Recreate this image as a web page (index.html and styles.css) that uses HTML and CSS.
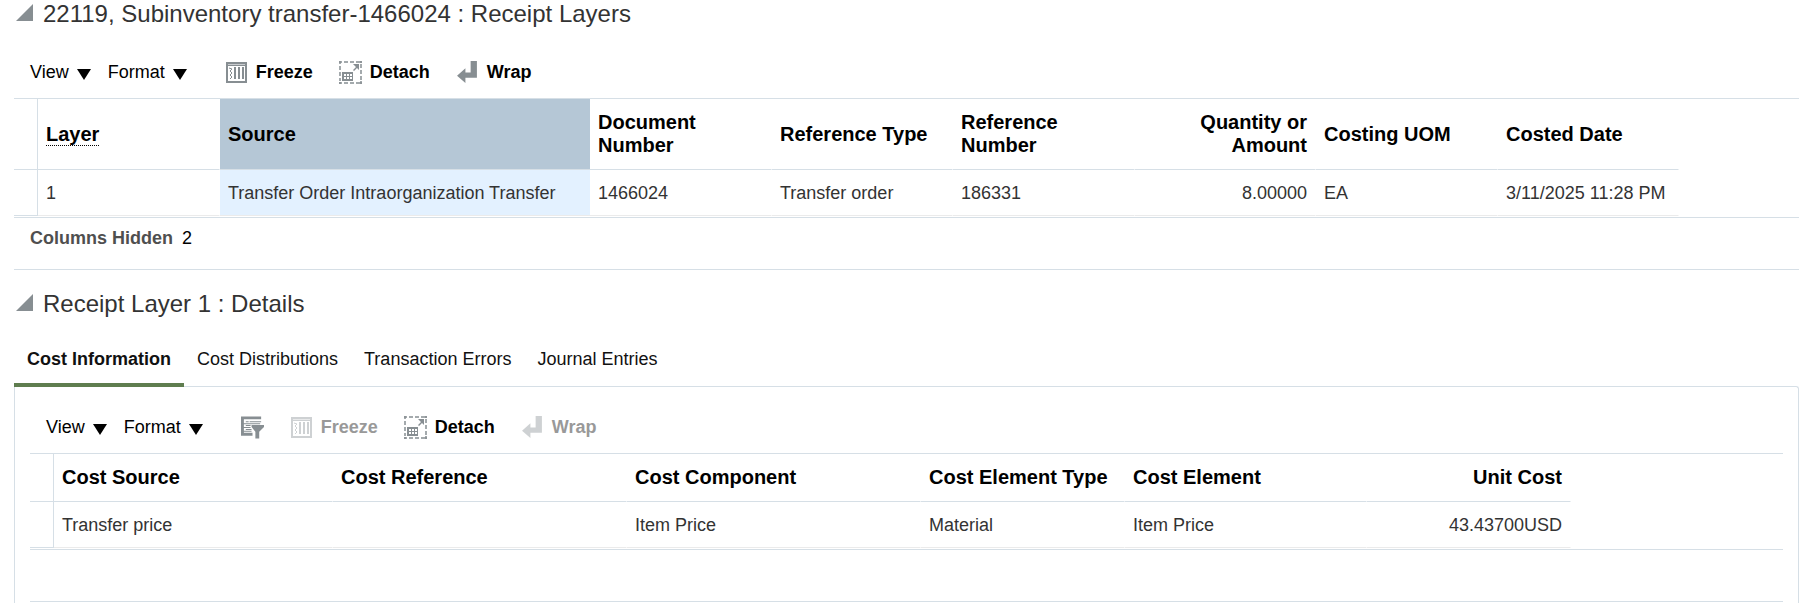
FILE: index.html
```html
<!DOCTYPE html>
<html lang="en">
<head>
    <meta charset="UTF-8">
    <meta name="viewport" content="width=device-width, initial-scale=1.0">
    <title>Receipt Layers</title>
    <link rel="stylesheet" href="styles.css">
</head>
<body>
    <!-- shared icons -->
    <svg class="icon-defs" width="0" height="0" aria-hidden="true">
        <symbol id="icon-disclosure" viewBox="0 0 17 17">
            <path d="M17 0v17H0z" fill="#878e92"/>
        </symbol>
        <symbol id="icon-arrow" viewBox="0 0 14 11">
            <path d="M0 0h14L7 11z" fill="#000"/>
        </symbol>
        <symbol id="icon-freeze" viewBox="0 0 23 23">
            <path d="M1 1h21v21H1zM3 5v15h17V5z" fill="#878e92" fill-rule="evenodd"/>
            <path d="M3 3h17v1H3z" fill="#c9cccf"/>
            <path d="M9 6h2v12H9zM13 6h2v12h-2zM17 6h2v12h-2z" fill="#878e92"/>
            <path d="M4 7l3 1-2 2 2 2-2 2 2 2-2 2" fill="none" stroke="#878e92"/>
        </symbol>
        <symbol id="icon-detach" viewBox="0 0 23 23">
            <path d="M0 1h3M5 1h4M11 1h4M17 1h3M0 22h3M5 22h4M11 22h4M17 22h3M1 0v3M1 5v4M1 11v4M1 17v3M22 3v4M22 9v4M22 15v4M20 1h3M20 22h3M22 0v2M1 21v2M22 20v3" fill="none" stroke="#878e92" stroke-width="1.5"/>
            <path d="M3 11h11v9H3z" fill="#878e92"/>
            <path d="M5 13h2v2H5zM8 13h2v2H8zM11 13h2v2h-2zM5 16h2v2H5zM8 16h2v2H8zM11 16h2v2h-2z" fill="#fff"/>
            <path d="M14 3h6v6l-2-2-3 3-1-1 3-3z" fill="#878e92"/>
        </symbol>
        <symbol id="icon-wrap" viewBox="0 0 20 22">
            <path d="M13 0h6v16H8v5L0 14l8-7v4h5z" fill="#878e92"/>
        </symbol>
        <symbol id="icon-filter" viewBox="0 0 24 23">
            <path d="M0 0h21v3H0zM0 3h3v17H0zM5 5h3v1H5zM9 5h12v1H9zM3 7h17v1H3zM5 9h5v1H5zM3 11h7v1H3zM5 13h6v1H5zM3 15h8v1H3zM0 17h12v3H0z" fill="#878e92"/>
            <path d="M11 9h13v2l-5 5v7h-4v-7l-4-5z" fill="#878e92"/>
        </symbol>
    </svg>

    <section class="section">
        <header class="section-header">
            <button type="button" class="disclosure" aria-label="Collapse Receipt Layers"><svg><use href="#icon-disclosure"/></svg></button>
            <h2>22119, Subinventory transfer-1466024 : Receipt Layers</h2>
        </header>

        <div class="toolbar">
            <button type="button" class="menu-btn">View <svg><use href="#icon-arrow"/></svg></button>
            <button type="button" class="menu-btn">Format <svg><use href="#icon-arrow"/></svg></button>
            <div class="tools">
                <button type="button" class="tool-btn"><svg><use href="#icon-freeze"/></svg>Freeze</button>
                <button type="button" class="tool-btn"><svg><use href="#icon-detach"/></svg>Detach</button>
                <button type="button" class="tool-btn"><svg><use href="#icon-wrap"/></svg>Wrap</button>
            </div>
        </div>

        <div class="table-wrap">
            <table class="layers-table">
                <colgroup>
                    <col class="col-handle">
                    <col class="col-id">
                    <col class="col-source">
                    <col class="col-id">
                    <col class="col-text">
                    <col class="col-id">
                    <col class="col-text">
                    <col class="col-id">
                    <col class="col-text">
                </colgroup>
                <thead>
                    <tr>
                        <td class="handle"></td>
                        <th scope="col"><span class="hint">Layer</span></th>
                        <th scope="col" class="selected">Source</th>
                        <th scope="col">Document<br>Number</th>
                        <th scope="col">Reference Type</th>
                        <th scope="col">Reference<br>Number</th>
                        <th scope="col" class="num">Quantity or<br>Amount</th>
                        <th scope="col">Costing UOM</th>
                        <th scope="col">Costed Date</th>
                    </tr>
                </thead>
                <tbody>
                    <tr>
                        <td class="handle"></td>
                        <td>1</td>
                        <td class="selected">Transfer Order Intraorganization Transfer</td>
                        <td>1466024</td>
                        <td>Transfer order</td>
                        <td>186331</td>
                        <td class="num">8.00000</td>
                        <td>EA</td>
                        <td>3/11/2025 11:28 PM</td>
                    </tr>
                </tbody>
            </table>
        </div>
        <p class="status"><strong>Columns Hidden</strong> 2</p>
    </section>

    <section class="section details">
        <header class="section-header">
            <button type="button" class="disclosure" aria-label="Collapse Details"><svg><use href="#icon-disclosure"/></svg></button>
            <h2>Receipt Layer 1 : Details</h2>
        </header>

        <nav class="tabs">
            <a href="#cost-information" class="tab active">Cost Information</a>
            <a href="#cost-distributions" class="tab">Cost Distributions</a>
            <a href="#transaction-errors" class="tab">Transaction Errors</a>
            <a href="#journal-entries" class="tab">Journal Entries</a>
        </nav>

        <div class="panel" id="cost-information">
            <div class="toolbar">
                <button type="button" class="menu-btn">View <svg><use href="#icon-arrow"/></svg></button>
                <button type="button" class="menu-btn">Format <svg><use href="#icon-arrow"/></svg></button>
                <div class="tools">
                    <button type="button" class="tool-btn" aria-label="Query by Example"><svg><use href="#icon-filter"/></svg></button>
                    <button type="button" class="tool-btn" disabled><svg><use href="#icon-freeze"/></svg>Freeze</button>
                    <button type="button" class="tool-btn"><svg><use href="#icon-detach"/></svg>Detach</button>
                    <button type="button" class="tool-btn" disabled><svg><use href="#icon-wrap"/></svg>Wrap</button>
                </div>
            </div>

            <div class="table-wrap">
                <table class="cost-table">
                    <colgroup>
                        <col class="col-handle">
                        <col class="col-cost-source">
                        <col class="col-wide">
                        <col class="col-wide">
                        <col class="col-narrow">
                        <col class="col-element">
                        <col class="col-narrow">
                    </colgroup>
                    <thead>
                        <tr>
                            <td class="handle"></td>
                            <th scope="col">Cost Source</th>
                            <th scope="col">Cost Reference</th>
                            <th scope="col">Cost Component</th>
                            <th scope="col">Cost Element Type</th>
                            <th scope="col">Cost Element</th>
                            <th scope="col" class="num">Unit Cost</th>
                        </tr>
                    </thead>
                    <tbody>
                        <tr>
                            <td class="handle"></td>
                            <td>Transfer price</td>
                            <td></td>
                            <td>Item Price</td>
                            <td>Material</td>
                            <td>Item Price</td>
                            <td class="num">43.43700USD</td>
                        </tr>
                    </tbody>
                </table>
            </div>
            <div class="panel-footer"></div>
        </div>
    </section>
</body>
</html>
```
FILE: styles.css
```css
* {
    box-sizing: border-box;
}
body {
    margin: 0;
    padding: 0 14px;
    font-family: "Liberation Sans", Arial, sans-serif;
    font-size: 18px;
    line-height: 22px;
    color: #000;
    background-color: #fff;
}
.icon-defs {
    display: none;
}
button {
    padding: 0;
    border: none;
    background: none;
    font: inherit;
    color: inherit;
    cursor: pointer;
}
.section-header {
    display: flex;
    align-items: center;
    gap: 10px;
    height: 28px;
    padding-left: 2px;
}
.disclosure svg {
    display: block;
    width: 17px;
    height: 17px;
    margin-bottom: 3px;
}
h2 {
    margin: 0;
    font-size: 24px;
    line-height: 28px;
    font-weight: normal;
    color: #333;
}

/* toolbar */
.toolbar {
    display: flex;
    align-items: center;
    gap: 17px;
    height: 52px;
    margin-top: 18px;
    padding-left: 16px;
}
.menu-btn,
.tool-btn {
    display: flex;
    align-items: center;
    gap: 8px;
}
.menu-btn svg {
    width: 14px;
    height: 11px;
    margin-top: 5px;
}
.tools {
    display: flex;
    gap: 26px;
    margin-left: 21px;
}
.tool-btn {
    font-weight: bold;
}
.tool-btn svg {
    width: 23px;
    height: 23px;
}
.tool-btn:disabled {
    color: #999;
    cursor: default;
}
.tool-btn:disabled svg {
    opacity: 0.4;
}

/* tables */
.table-wrap {
    padding-bottom: 1px;
    border-top: 1px solid #d6dfe6;
    border-bottom: 1px solid #d6dfe6;
    overflow: hidden;
}
table {
    table-layout: fixed;
    border-collapse: separate;
    border-spacing: 0;
}
.layers-table {
    width: 1665px;
}
.cost-table {
    width: 1541px;
}
.col-handle {
    width: 24px;
}
.col-id {
    width: 182px;
}
.col-text {
    width: 181px;
}
.col-source {
    width: 370px;
}
.col-cost-source {
    width: 279px;
}
.col-wide {
    width: 294px;
}
.col-narrow {
    width: 204px;
}
.col-element {
    width: 242px;
}
th,
td {
    padding: 0 8px;
    text-align: left;
    white-space: nowrap;
    border-right: 1px solid #fff;
}
th {
    height: 48px;
    font-size: 20px;
    line-height: 23px;
    border-bottom: 1px solid #d6dfe6;
}
.layers-table th {
    height: 71px;
}
td {
    height: 46px;
    color: #333;
    border-bottom: 1px solid #ebebeb;
}
.handle {
    padding: 0;
    border-right: 1px solid #d6dfe6;
    border-bottom: 1px solid #d6dfe6;
}
.num {
    text-align: right;
}
.hint {
    border-bottom: 1px dotted #000;
}
.selected {
    border-right: none;
}
th.selected {
    background-color: #b5c7d6;
}
td.selected {
    background-color: #e3f1ff;
}
.status {
    margin: 0;
    padding: 9px 16px 20px;
    border-bottom: 1px solid #d6dfe6;
}
.status strong {
    margin-right: 4px;
    color: #4f4f4f;
}

/* details */
.details {
    padding-top: 20px;
}
.tabs {
    display: flex;
    margin-top: 8px;
}
.tab {
    height: 61px;
    padding: 22px 13px 0;
    color: #111;
    text-decoration: none;
}
.tab.active {
    position: relative;
    z-index: 1;
    font-weight: bold;
    border-bottom: 4px solid #5f7d4f;
}
.panel {
    min-height: 217px;
    margin-top: -1px;
    padding: 0 15px;
    border: 1px solid #d6dfe6;
    border-bottom: none;
    border-radius: 0 3px 0 0;
}
.panel .toolbar {
    margin-top: 14px;
}
.panel-footer {
    height: 52px;
    border-bottom: 1px solid #d6dfe6;
}
```
